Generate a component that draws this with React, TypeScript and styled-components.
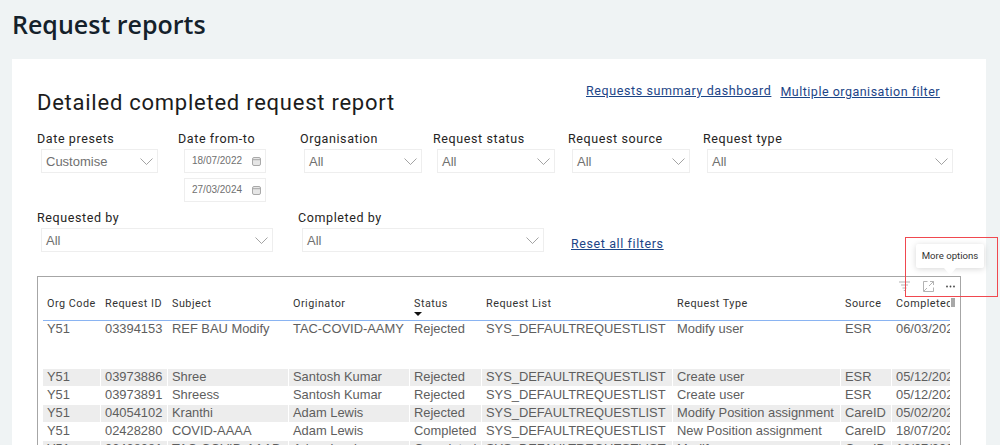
import React from "react";
import styled, { createGlobalStyle } from "styled-components";

const Global = createGlobalStyle`
  html, body { margin: 0; padding: 0; height: 445px; overflow: hidden; background: #eff3f4; }
  * { box-sizing: border-box; }
`;

const Page = styled.div`
  width: 1000px;
  height: 445px;
  overflow: hidden;
  position: relative;
  background: #eff3f4;
  padding: 0 14px 0 12px;
`;

const PageTitle = styled.h1`
  margin: 0;
  height: 59px;
  padding-top: 7px;
  font: 600 25px/34px "Open Sans", sans-serif;
  color: #14212b;
`;

const Card = styled.div`
  background: #fff;
  height: 386px;
  padding: 0 0 0 25px;
`;

const ReportHeader = styled.div`
  display: flex;
  height: 70px;
  align-items: flex-start;
`;

const ReportTitle = styled.h2`
  margin: 28px 0 0;
  width: 549px;
  font: 400 22px/32px Roboto, sans-serif;
  letter-spacing: 0.75px;
  color: #1c1c1c;
`;

const LinkText = styled.a<{ $top: number; $left: number; $spacing?: number }>`
  margin: ${(p) => p.$top}px 0 0 ${(p) => p.$left}px;
  font: 400 12.5px/18px Roboto, sans-serif;
  letter-spacing: ${(p) => p.$spacing ?? 0.6}px;
  color: #1c4587;
  text-decoration: underline;
  white-space: nowrap;
`;

const FilterGrid = styled.div<{ $columns: string; $height: number }>`
  display: grid;
  grid-template-columns: ${(p) => p.$columns};
  height: ${(p) => p.$height}px;
  align-items: start;
`;

const Filter = styled.div`
  display: flex;
  flex-direction: column;
`;

const FilterLabel = styled.label`
  font: 400 12.5px/20px Roboto, sans-serif;
  letter-spacing: 0.6px;
  color: #252423;
  white-space: nowrap;
`;

const Select = styled.div<{ $width: number }>`
  width: ${(p) => p.$width}px;
  height: 24px;
  margin-left: 4px;
  border: 1px solid #eeeeee;
  padding: 1px 4px 0 4px;
  display: flex;
  align-items: center;
  justify-content: space-between;
  font: 400 13px/20px "Liberation Sans", sans-serif;
  color: #707070;
`;

const Chevron = () => (
  <svg width="13" height="7" viewBox="0 0 13 7" fill="none">
    <path d="M.5.5l6 6 6-6" stroke="#8c8c8c" strokeWidth="0.8" />
  </svg>
);

const DateStack = styled.div`
  display: flex;
  flex-direction: column;
  gap: 5px;
  margin-left: 6px;
`;

const DateBox = styled.div`
  width: 82px;
  height: 24px;
  border: 1px solid #eeeeee;
  padding: 0 4px 0 7px;
  display: flex;
  align-items: center;
  justify-content: space-between;
  font: 400 10px/14px "Liberation Sans", sans-serif;
  color: #707070;
`;

const CalendarIcon = () => (
  <svg width="9" height="9" viewBox="0 0 9 9" fill="none">
    <rect x="0.5" y="0.5" width="8" height="8" rx="1.5" fill="#e6e6e6" stroke="#8a8a8a" strokeWidth="0.7" />
    <path d="M1 2.7h7" stroke="#8a8a8a" strokeWidth="0.7" />
  </svg>
);

const ResetLink = styled(LinkText)`
  align-self: start;
`;

const TableFrame = styled.div`
  position: relative;
  width: 924px;
  height: 180px;
  border: 1px solid #a6a6a6;
  border-bottom: none;
  padding-left: 5px;
`;

const TableClip = styled.div`
  width: 907px;
  height: 179px;
  overflow: hidden;
`;

const cols = "58px 67px 121px 121px 72px 191px 168px 51px 58px";

const HeaderRow = styled.div`
  display: grid;
  grid-template-columns: ${cols};
  height: 44px;
  border-bottom: 1px solid #8ab4f2;
`;

const HeaderCell = styled.div`
  position: relative;
  padding: 19px 0 0 4px;
  font: 400 10.8px/16px Roboto, sans-serif;
  letter-spacing: 0.5px;
  color: #333;
  white-space: nowrap;
  overflow: hidden;
`;

const SortMark = styled.span`
  position: absolute;
  left: 4px;
  top: 35px;
  width: 0;
  height: 0;
  border-left: 4px solid transparent;
  border-right: 4px solid transparent;
  border-top: 4px solid #111;
`;

const DataRow = styled.div<{ $height?: number }>`
  display: grid;
  grid-template-columns: ${cols};
  height: ${(p) => p.$height ?? 18}px;
`;

const DataCell = styled.div<{ $shaded: boolean }>`
  height: 17px;
  margin-right: 1px;
  padding: 0 0 0 4px;
  background: ${(p) => (p.$shaded ? "#ededed" : "transparent")};
  font: 400 12.9px/16px "Liberation Sans", sans-serif;
  color: #5e5e5e;
  white-space: nowrap;
  overflow: hidden;
`;

const LastCell = styled(DataCell)`
  margin-right: 0;
`;

const ScrollThumb = styled.div`
  position: absolute;
  left: 913px;
  top: 21px;
  width: 4px;
  height: 9px;
  background: #a8a8a8;
`;

const VisualTools = styled.div`
  position: absolute;
  left: 861px;
  top: 1px;
  width: 56px;
  height: 16px;
  display: flex;
  align-items: center;
  justify-content: space-between;
`;

const FilterGlyph = () => (
  <svg width="11" height="10" viewBox="0 0 11 10" fill="none" stroke="#aaaaaa" strokeWidth="0.9">
    <path d="M0 1h11M2 4h7M3.5 7h4M4.8 9.5h1.6" />
  </svg>
);

const ExpandGlyph = () => (
  <svg width="11" height="11" viewBox="0 0 11 11" fill="none" stroke="#aaaaaa" strokeWidth="0.9">
    <path d="M4.5 .5H.5v10h10V6.5M7 .5h3.5V4M10.5.5L6 5M1 10l3-3" />
  </svg>
);

const Dots = () => (
  <svg width="9" height="3" viewBox="0 0 9 3" fill="#444">
    <circle cx="1" cy="1.5" r="0.9" />
    <circle cx="4.5" cy="1.5" r="0.9" />
    <circle cx="8" cy="1.5" r="0.9" />
  </svg>
);

const Tooltip = styled.div`
  position: absolute;
  left: 916px;
  top: 244px;
  width: 68px;
  height: 24px;
  background: #fff;
  border-radius: 2px;
  box-shadow: 0 1px 6px rgba(0, 0, 0, 0.16);
  font: 400 9.6px/24px Roboto, sans-serif;
  text-align: center;
  color: #333;
  &::after {
    content: "";
    position: absolute;
    left: 28px;
    top: 24px;
    border-left: 6px solid transparent;
    border-right: 6px solid transparent;
    border-top: 7px solid #fff;
  }
`;

const Highlight = styled.div`
  position: absolute;
  left: 905px;
  top: 237px;
  width: 93px;
  height: 60px;
  border: 1px solid #f0484f;
  pointer-events: none;
`;

const headers = ["Org Code", "Request ID", "Subject", "Originator", "Status", "Request List", "Request Type", "Source", "Completed on"];

const L = "SYS_DEFAULTREQUESTLIST";
const rows: string[][] = [
  ["Y51", "03394153", "REF BAU Modify", "TAC-COVID-AAMY", "Rejected", L, "Modify user", "ESR", "06/03/2024"],
  ["Y51", "03973886", "Shree", "Santosh Kumar", "Rejected", L, "Create user", "ESR", "05/12/2023"],
  ["Y51", "03973891", "Shreess", "Santosh Kumar", "Rejected", L, "Create user", "ESR", "05/12/2023"],
  ["Y51", "04054102", "Kranthi", "Adam Lewis", "Rejected", L, "Modify Position assignment", "CareID", "05/02/2024"],
  ["Y51", "02428280", "COVID-AAAA", "Adam Lewis", "Completed", L, "New Position assignment", "CareID", "18/07/2022"],
  ["Y51", "02428281", "TAC-COVID-AAAB", "Adam Lewis", "Completed", L, "Modify user", "CareID", "18/07/2022"],
];

const SelectFilter = ({ label, width, value = "All" }: { label: string; width: number; value?: string }) => (
  <Filter>
    <FilterLabel>{label}</FilterLabel>
    <Select $width={width}>
      {value}
      <Chevron />
    </Select>
  </Filter>
);

export default function App() {
  return (
    <Page>
      <Global />
      <PageTitle>Request reports</PageTitle>
      <Card>
        <ReportHeader>
          <ReportTitle>Detailed completed request report</ReportTitle>
          <LinkText $top={23} $left={0}>Requests summary dashboard</LinkText>
          <LinkText $top={24} $left={9} $spacing={0.5}>Multiple organisation filter</LinkText>
        </ReportHeader>
        <FilterGrid $columns="141px 122px 133px 135px 135px 250px" $height={79}>
          <SelectFilter label="Date presets" width={117} value="Customise" />
          <Filter>
            <FilterLabel>Date from-to</FilterLabel>
            <DateStack>
              <DateBox>18/07/2022<CalendarIcon /></DateBox>
              <DateBox>27/03/2024<CalendarIcon /></DateBox>
            </DateStack>
          </Filter>
          <SelectFilter label="Organisation" width={118} />
          <SelectFilter label="Request status" width={118} />
          <SelectFilter label="Request source" width={118} />
          <SelectFilter label="Request type" width={246} />
        </FilterGrid>
        <FilterGrid $columns="261px 273px auto" $height={68}>
          <SelectFilter label="Requested by" width={232} />
          <SelectFilter label="Completed by" width={242} />
          <ResetLink $top={27} $left={0}>Reset all filters</ResetLink>
        </FilterGrid>
        <TableFrame>
          <TableClip>
            <HeaderRow>
              {headers.map((h) => (
                <HeaderCell key={h}>
                  {h}
                  {h === "Status" && <SortMark />}
                </HeaderCell>
              ))}
            </HeaderRow>
            {rows.map((row, i) => (
              <DataRow key={row[1]} $height={i === 0 ? 48 : 18}>
                {row.map((c, j) =>
                  j === row.length - 1 ? (
                    <LastCell key={j} $shaded={i % 2 === 1}>{c}</LastCell>
                  ) : (
                    <DataCell key={j} $shaded={i % 2 === 1}>{c}</DataCell>
                  )
                )}
              </DataRow>
            ))}
          </TableClip>
          <ScrollThumb />
          <VisualTools>
            <FilterGlyph />
            <ExpandGlyph />
            <Dots />
          </VisualTools>
        </TableFrame>
      </Card>
      <Tooltip>More options</Tooltip>
      <Highlight />
    </Page>
  );
}
